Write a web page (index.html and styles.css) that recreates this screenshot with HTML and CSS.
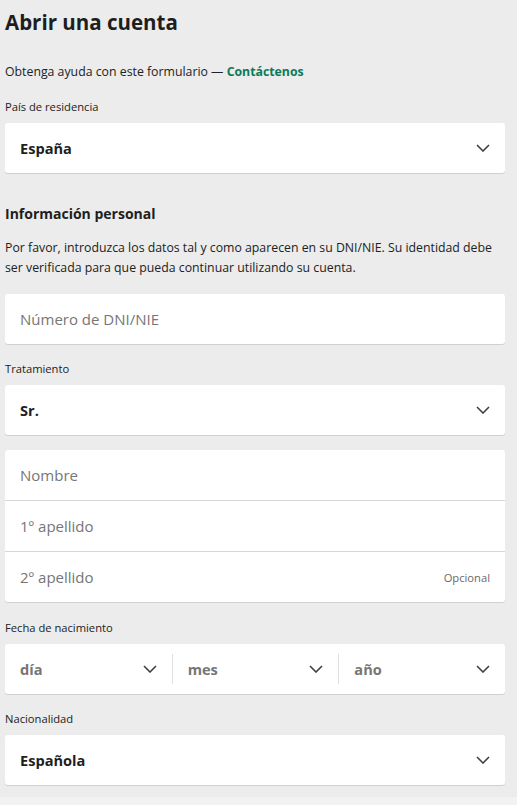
FILE: index.html
```html
<!DOCTYPE html>
<html lang="es">
<head>
<meta charset="utf-8">
<title>Abrir una cuenta</title>
<link rel="stylesheet" href="styles.css">
</head>
<body>
<main class="page">
  <h1 class="title">Abrir una cuenta</h1>
  <p class="help">Obtenga ayuda con este formulario — <a class="link" href="#">Contáctenos</a></p>

  <div class="field first">
    <label class="label">País de residencia</label>
    <div class="card select">
      <span class="value">España</span>
      <svg class="chev" viewBox="0 0 14 8" width="14" height="8"><path d="M1 1l6 6 6-6" fill="none" stroke="#404040" stroke-width="1.6"/></svg>
    </div>
  </div>

  <h2 class="section">Información personal</h2>
  <p class="intro">Por favor, introduzca los datos tal y como aparecen en su DNI/NIE. Su identidad debe ser verificada para que pueda continuar utilizando su cuenta.</p>

  <div class="card input dni"><span class="ph">Número de DNI/NIE</span></div>

  <div class="field">
    <label class="label">Tratamiento</label>
    <div class="card select">
      <span class="value">Sr.</span>
      <svg class="chev" viewBox="0 0 14 8" width="14" height="8"><path d="M1 1l6 6 6-6" fill="none" stroke="#404040" stroke-width="1.6"/></svg>
    </div>
  </div>

  <div class="card group">
    <div class="row"><span class="ph">Nombre</span></div>
    <div class="row"><span class="ph">1º apellido</span></div>
    <div class="row"><span class="ph">2º apellido</span><span class="opt">Opcional</span></div>
  </div>

  <div class="field after-group">
    <label class="label">Fecha de nacimiento</label>
    <div class="card date">
      <div class="part"><span class="dval">día</span><svg class="chev" viewBox="0 0 14 8" width="14" height="8"><path d="M1 1l6 6 6-6" fill="none" stroke="#404040" stroke-width="1.6"/></svg></div>
      <div class="part"><span class="dval">mes</span><svg class="chev" viewBox="0 0 14 8" width="14" height="8"><path d="M1 1l6 6 6-6" fill="none" stroke="#404040" stroke-width="1.6"/></svg></div>
      <div class="part"><span class="dval">año</span><svg class="chev" viewBox="0 0 14 8" width="14" height="8"><path d="M1 1l6 6 6-6" fill="none" stroke="#404040" stroke-width="1.6"/></svg></div>
    </div>
  </div>

  <div class="field">
    <label class="label">Nacionalidad</label>
    <div class="card select">
      <span class="value">Española</span>
      <svg class="chev" viewBox="0 0 14 8" width="14" height="8"><path d="M1 1l6 6 6-6" fill="none" stroke="#404040" stroke-width="1.6"/></svg>
    </div>
  </div>
</main>
<div class="foot"></div>
</body>
</html>
```
FILE: styles.css
```css
* { box-sizing: border-box; }
html, body { margin: 0; padding: 0; }
body {
  background: #ebeceb;
  font-family: "Open Sans", "Noto Sans", "Liberation Sans", sans-serif;
  color: #222;
}
.page {
  width: 505px;
  padding: 0 0 12px 5px;
}
.title {
  margin: 0;
  padding-top: 7px;
  font-size: 20.5px;
  font-weight: 700;
  line-height: 30px;
  color: #1e1e1e;
}
.help {
  margin: 26px 0 0;
  font-size: 12.3px;
  line-height: 18px;
  color: #222;
}
.link {
  color: #0b7a5a;
  font-weight: 700;
  text-decoration: none;
}
.label {
  display: block;
  font-size: 11.2px;
  line-height: 18px;
  color: #222;
  margin-bottom: 7px;
}
.card {
  background: #fff;
  border-radius: 3px;
  box-shadow: 0 1px 0 #cfd0cf;
}
.select, .input {
  height: 50px;
  display: flex;
  align-items: center;
  justify-content: space-between;
  padding: 0 15px;
}
.value {
  font-size: 14.6px;
  font-weight: 700;
  color: #1e1e1e;
}
.chev { display: block; flex: none; }
.field { margin-top: 16px; }
.field.first { margin-top: 17px; }
.field.after-group { margin-top: 17px; }
.section {
  margin: 30px 0 0;
  font-size: 14px;
  font-weight: 700;
  line-height: 22px;
  color: #1e1e1e;
}
.intro {
  margin: 13px 0 0;
  font-size: 12.3px;
  line-height: 20px;
  color: #222;
}
.dni { margin-top: 16px; }
.ph {
  font-size: 15px;
  color: #767676;
}
.group { margin-top: 15px; display: flex; flex-direction: column; }
.row {
  height: 51px;
  display: flex;
  align-items: center;
  justify-content: space-between;
  padding: 0 15px;
  border-top: 1px solid #d6d6d6;
}
.row:first-child { border-top: 0; height: 50px; }
.opt { font-size: 11.2px; color: #6a6a6a; }
.date {
  height: 50px;
  display: grid;
  grid-template-columns: 1fr 1fr 1fr;
  align-items: center;
}
.part {
  display: flex;
  align-items: center;
  justify-content: space-between;
  padding: 0 15px;
  height: 30px;
  border-left: 1px solid #e0e0e0;
}
.part:first-child { border-left: 0; }
.dval {
  font-size: 14.6px;
  font-weight: 700;
  color: #767676;
}
.foot {
  height: 8px;
  background: #f2f2f2;
}
```
